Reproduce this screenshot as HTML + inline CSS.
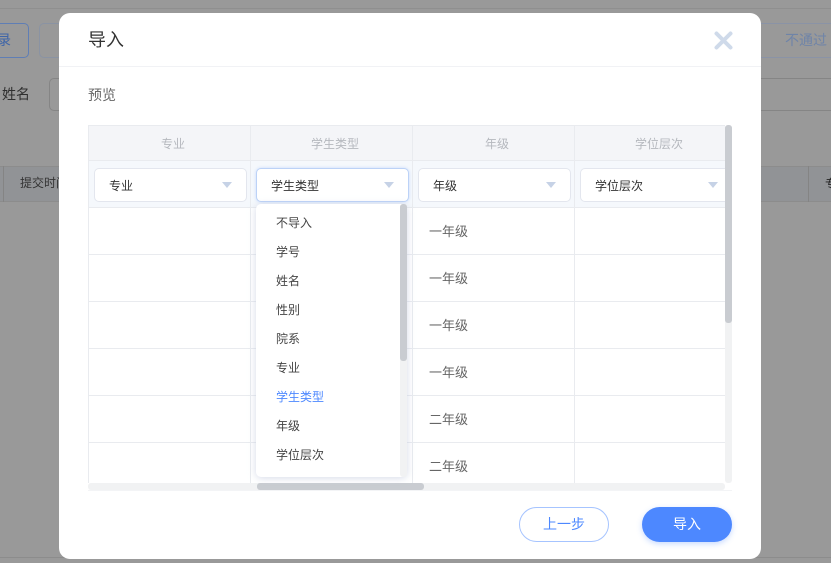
<!DOCTYPE html>
<html lang="zh">
<head>
<meta charset="utf-8">
<style>
*{box-sizing:border-box;margin:0;padding:0}
html,body{width:831px;height:563px;overflow:hidden;background:#999;font-family:"Liberation Sans","Noto Sans CJK SC",sans-serif}
.a{position:absolute}
.t{position:absolute;white-space:nowrap;line-height:20px}
#dlg{left:59px;top:13px;width:702px;height:546px;background:#fff;border-radius:11px}
.sel{position:absolute;top:168px;height:34px;background:#fff;border:1px solid #e3e6ee;border-radius:5px;font-size:12px;color:#333;line-height:35px;padding-left:14px;white-space:nowrap}
.tri{position:absolute;width:0;height:0;border-left:5.5px solid transparent;border-right:5.5px solid transparent;border-top:6px solid #c6d2e6;top:182px}
.hd{font-size:12px;color:#b5b8be;text-align:center;top:134px;width:162px}
.yr{font-size:13px;color:#666;left:429px}
.it{font-size:12px;color:#444;left:276px}
</style>
</head>
<body>
<!-- background page -->
<div class="a" style="left:0;top:8px;width:831px;height:1px;background:#8f8f8f"></div>
<div class="a" style="left:-20px;top:23px;width:49px;height:35px;border:1px solid #5f7eb5;border-radius:5px"></div>
<div class="t" style="left:-3px;top:30px;font-size:14px;color:#3f65a8">录</div>
<div class="a" style="left:39px;top:23px;width:40px;height:35px;border:1px solid #8a93a3;border-radius:5px"></div>
<div class="a" style="left:740px;top:23px;width:110px;height:35px;border:1px solid #8a93a6;border-radius:5px"></div>
<div class="t" style="left:785px;top:30px;font-size:14px;color:#6f84a8">不通过</div>
<div class="a" style="left:761px;top:78px;width:70px;height:1px;background:#858585"></div>
<div class="a" style="left:761px;top:110px;width:70px;height:1px;background:#858585"></div>
<div class="t" style="left:2px;top:84px;font-size:14px;color:#2f2f2f">姓名</div>
<div class="a" style="left:49px;top:78px;width:30px;height:33px;border:1px solid #858585;border-radius:5px"></div>
<div class="a" style="left:0;top:166px;width:831px;height:36px;background:#919396;border-top:1px solid #8c8c8c;border-bottom:1px solid #8c8c8c"></div>
<div class="a" style="left:3px;top:166px;width:1px;height:36px;background:#848484"></div>
<div class="a" style="left:808px;top:166px;width:1px;height:36px;background:#848484"></div>
<div class="t" style="left:20px;top:173px;font-size:12px;color:#333">提交时间</div>
<div class="t" style="left:825px;top:174px;font-size:12px;color:#222">专业</div>
<div class="a" style="left:0;top:557px;width:831px;height:1px;background:#8c8c8c"></div>

<!-- dialog -->
<div class="a" id="dlg"></div>
<div class="t" style="left:88px;top:29px;font-size:18px;line-height:22px;color:#333">导入</div>
<svg class="a" style="left:713px;top:30px" width="21" height="21" viewBox="0 0 21 21"><path d="M3.5 3.5L17.5 17.5M17.5 3.5L3.5 17.5" stroke="#cfdaea" stroke-width="4" stroke-linecap="round" fill="none"/></svg>
<div class="a" style="left:59px;top:66px;width:702px;height:1px;background:#f1f2f5"></div>
<div class="t" style="left:88px;top:85px;font-size:14px;color:#666">预览</div>

<!-- table -->
<div class="a" style="left:88px;top:125px;width:637px;height:35px;background:#f4f5f8"></div>
<div class="a" style="left:88px;top:160px;width:637px;height:47px;background:#f5f8fc"></div>
<div class="a" style="left:88px;top:125px;width:637px;height:1px;background:#e9ebef"></div>
<div class="a" style="left:88px;top:160px;width:637px;height:1px;background:#e9ebef"></div>
<div class="a" style="left:88px;top:207px;width:637px;height:1px;background:#e9ebef"></div>
<div class="a" style="left:88px;top:254px;width:637px;height:1px;background:#e9ebef"></div>
<div class="a" style="left:88px;top:301px;width:637px;height:1px;background:#e9ebef"></div>
<div class="a" style="left:88px;top:348px;width:637px;height:1px;background:#e9ebef"></div>
<div class="a" style="left:88px;top:395px;width:637px;height:1px;background:#e9ebef"></div>
<div class="a" style="left:88px;top:442px;width:637px;height:1px;background:#e9ebef"></div>
<div class="a" style="left:88px;top:125px;width:1px;height:358px;background:#e9ebef"></div>
<div class="a" style="left:250px;top:125px;width:1px;height:358px;background:#e9ebef"></div>
<div class="a" style="left:412px;top:125px;width:1px;height:358px;background:#e9ebef"></div>
<div class="a" style="left:574px;top:125px;width:1px;height:358px;background:#e9ebef"></div>

<div class="t hd" style="left:92px">专业</div>
<div class="t hd" style="left:254px">学生类型</div>
<div class="t hd" style="left:416px">年级</div>
<div class="t hd" style="left:578px">学位层次</div>

<div class="sel" style="left:94px;width:153px">专业</div>
<div class="tri" style="left:222px"></div>
<div class="sel" style="left:256px;width:153px;border-color:#bcd2f7;box-shadow:0 0 3px #c7dafc">学生类型</div>
<div class="tri" style="left:384px"></div>
<div class="sel" style="left:418px;width:153px">年级</div>
<div class="tri" style="left:546px"></div>
<div class="sel" style="left:580px;width:145px;border-right:0;border-radius:5px 0 0 5px">学位层次</div>
<div class="tri" style="left:708px"></div>

<div class="t yr" style="top:222px">一年级</div>
<div class="t yr" style="top:269px">一年级</div>
<div class="t yr" style="top:316px">一年级</div>
<div class="t yr" style="top:363px">一年级</div>
<div class="t yr" style="top:410px">二年级</div>
<div class="t yr" style="top:457px">二年级</div>

<!-- scrollbars -->
<div class="a" style="left:725px;top:125px;width:7px;height:358px;background:#f1f2f3;border-radius:3px"></div>
<div class="a" style="left:725px;top:125px;width:7px;height:198px;background:#c9ccd1;border-radius:3px"></div>
<div class="a" style="left:88px;top:483px;width:637px;height:7px;background:#f1f2f3;border-radius:3px"></div>
<div class="a" style="left:257px;top:483px;width:167px;height:7px;background:#c9ccd1;border-radius:3px"></div>
<div class="a" style="left:88px;top:490px;width:644px;height:1px;background:#f3f4f6"></div>

<!-- dropdown -->
<div class="a" style="left:256px;top:204px;width:151px;height:273px;background:#fff;border-radius:5px;box-shadow:0 1px 8px rgba(190,198,220,.65)"></div>
<div class="a" style="left:400px;top:204px;width:7px;height:273px;background:#f1f2f3;border-radius:3px"></div>
<div class="a" style="left:400px;top:204px;width:7px;height:157px;background:#c9ccd1;border-radius:3px"></div>
<div class="t it" style="top:213px">不导入</div>
<div class="t it" style="top:242px">学号</div>
<div class="t it" style="top:271px">姓名</div>
<div class="t it" style="top:300px">性别</div>
<div class="t it" style="top:329px">院系</div>
<div class="t it" style="top:358px">专业</div>
<div class="t it" style="top:387px;color:#4d88ff">学生类型</div>
<div class="t it" style="top:416px">年级</div>
<div class="t it" style="top:445px">学位层次</div>

<!-- buttons -->
<div class="a" style="left:519px;top:507px;width:90px;height:35px;border:1px solid #a6c4ff;border-radius:18px;background:#fff;color:#4d88ff;font-size:14px;text-align:center;line-height:33px">上一步</div>
<div class="a" style="left:642px;top:507px;width:90px;height:35px;border-radius:18px;background:#4d88ff;color:#fff;font-size:14px;text-align:center;line-height:35px;box-shadow:0 2px 6px rgba(77,136,255,.3)">导入</div>
</body>
</html>
